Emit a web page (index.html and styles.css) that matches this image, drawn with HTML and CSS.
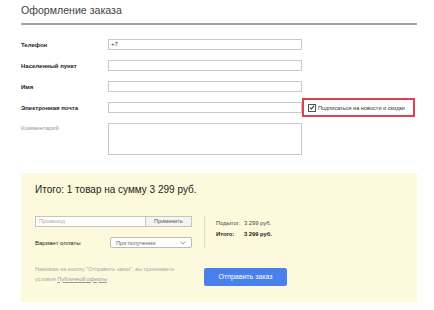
FILE: index.html
```html
<!DOCTYPE html>
<html lang="ru">
<head>
    <meta charset="UTF-8">
    <title>Оформление заказа</title>
    <link rel="stylesheet" href="styles.css">
</head>
<body>
    <div class="page">
        <h1 class="title">Оформление заказа</h1>

        <div class="order-form">
            <div class="form-row">
                <label>Телефон</label>
                <div class="field">+7</div>
            </div>
            <div class="form-row">
                <label>Населенный пункт</label>
                <div class="field"></div>
            </div>
            <div class="form-row">
                <label>Имя</label>
                <div class="field"></div>
            </div>
            <div class="form-row">
                <label>Электронная почта</label>
                <div class="field"></div>
                <div class="subscribe">
                    <span class="check">
                        <svg width="7" height="7" viewBox="0 0 7 7"><path d="M1.2 3.6 L2.8 5.2 L5.9 1.4" fill="none" stroke="#333" stroke-width="1.2"/></svg>
                    </span>
                    Подписаться на новости и скидки
                </div>
            </div>
            <div class="form-row">
                <label class="muted">Комментарий</label>
                <div class="field comment"></div>
            </div>
        </div>

        <div class="summary-box">
            <div class="total-title">Итого: 1 товар на сумму 3 299 руб.</div>

            <div class="summary-grid">
                <div class="controls">
                    <div class="promo">
                        <div class="promo-input">Промокод</div>
                        <div class="promo-btn">Применить</div>
                    </div>
                    <div class="payment">
                        <span>Вариант оплаты</span>
                        <div class="select">
                            При получении
                            <svg width="6" height="4" viewBox="0 0 6 4"><path d="M0.7 0.8 L3 3 L5.3 0.8" fill="none" stroke="#888" stroke-width="0.9"/></svg>
                        </div>
                    </div>
                </div>
                <div class="totals">
                    <div class="line"><span>Подытог:</span>3 299 руб.</div>
                    <div class="line bold"><span>Итого:</span>3 299 руб.</div>
                </div>

                <div class="terms">
                    <div>Нажимая на кнопку "Отправить заказ", вы принимаете</div>
                    <div>условия <u>Публичной оферты</u></div>
                </div>
                <div class="submit-wrap">
                    <div class="submit">Отправить заказ</div>
                </div>
            </div>
        </div>
    </div>
</body>
</html>
```

FILE: styles.css
```css
body {
    margin: 0;
    background: #fff;
    font-family: "Liberation Sans", Arial, sans-serif;
    color: #333;
}

.page {
    width: 396px;
    padding: 3px 0 0 21px;
}

.title {
    margin: 0;
    font-size: 10.6px;
    line-height: 14px;
    font-weight: normal;
    color: #444;
    padding-bottom: 6px;
    border-bottom: 2px solid #a3a3a3;
}

/* form */
.order-form {
    margin-top: 14px;
}

.form-row {
    display: flex;
    align-items: center;
    margin-bottom: 10px;
}

.form-row:last-child {
    margin-bottom: 0;
}

.form-row label {
    width: 87px;
    font-size: 6px;
    font-weight: bold;
    color: #222;
    align-self: center;
}

.form-row label.muted {
    font-weight: normal;
    color: #999;
    align-self: flex-start;
    padding-top: 2px;
}

.field {
    width: 190px;
    height: 9px;
    border: 1px solid #c8c8c8;
    font-size: 6px;
    line-height: 9px;
    padding-left: 2px;
    color: #333;
}

.field.comment {
    height: 30px;
}

.subscribe {
    display: flex;
    align-items: center;
    gap: 2px;
    margin: -4px 0;
    height: 15px;
    width: 105px;
    padding-left: 4px;
    border: 2px solid #e0414f;
    font-size: 5.6px;
    color: #333;
    white-space: nowrap;
}

.check {
    display: inline-flex;
    width: 6px;
    height: 6px;
    border: 1px solid #555;
    align-items: center;
    justify-content: center;
}

/* summary */
.summary-box {
    margin-top: 18px;
    background: #fdf9dd;
    height: 129px;
    box-sizing: border-box;
    padding: 10px 0 0 14px;
}

.total-title {
    font-size: 10px;
    line-height: 14px;
    color: #222;
}

.summary-grid {
    display: grid;
    grid-template-columns: 169px 1fr;
    row-gap: 17px;
    margin-top: 19px;
}

.promo {
    display: flex;
    width: 157px;
    height: 11px;
}

.promo-input {
    flex: 1;
    border: 1px solid #c4c4c4;
    border-right: none;
    background: #fff;
    font-size: 5.6px;
    line-height: 9px;
    padding-left: 3px;
    color: #aaa;
}

.promo-btn {
    width: 45px;
    border: 1px solid #c4c4c4;
    background: #f4f4f4;
    font-size: 5.6px;
    line-height: 9px;
    text-align: center;
    color: #555;
}

.payment {
    display: flex;
    align-items: center;
    justify-content: space-between;
    width: 157px;
    margin-top: 10px;
    font-size: 6px;
    color: #222;
}

.select {
    display: flex;
    align-items: center;
    justify-content: space-between;
    width: 70px;
    height: 9px;
    padding: 0 5px;
    border: 1px solid #bbb;
    border-radius: 2px;
    background: #fff;
    font-size: 5.6px;
    color: #666;
}

.totals {
    border-left: 1px solid #e2ddc0;
    padding: 2px 0 0 11px;
    font-size: 5.8px;
    color: #444;
}

.totals .line {
    line-height: 11px;
}

.totals .line span {
    display: inline-block;
    width: 28px;
}

.totals .bold {
    font-weight: bold;
    color: #222;
}

.terms {
    font-size: 5.5px;
    line-height: 9.5px;
    color: #aaa;
    white-space: nowrap;
}

.terms u {
    color: #999;
}

.submit-wrap {
    padding-top: 3px;
}

.submit {
    width: 83px;
    height: 18px;
    background: #4a80ec;
    border-radius: 2px;
    color: #fff;
    font-size: 7px;
    line-height: 18px;
    text-align: center;
}
```
